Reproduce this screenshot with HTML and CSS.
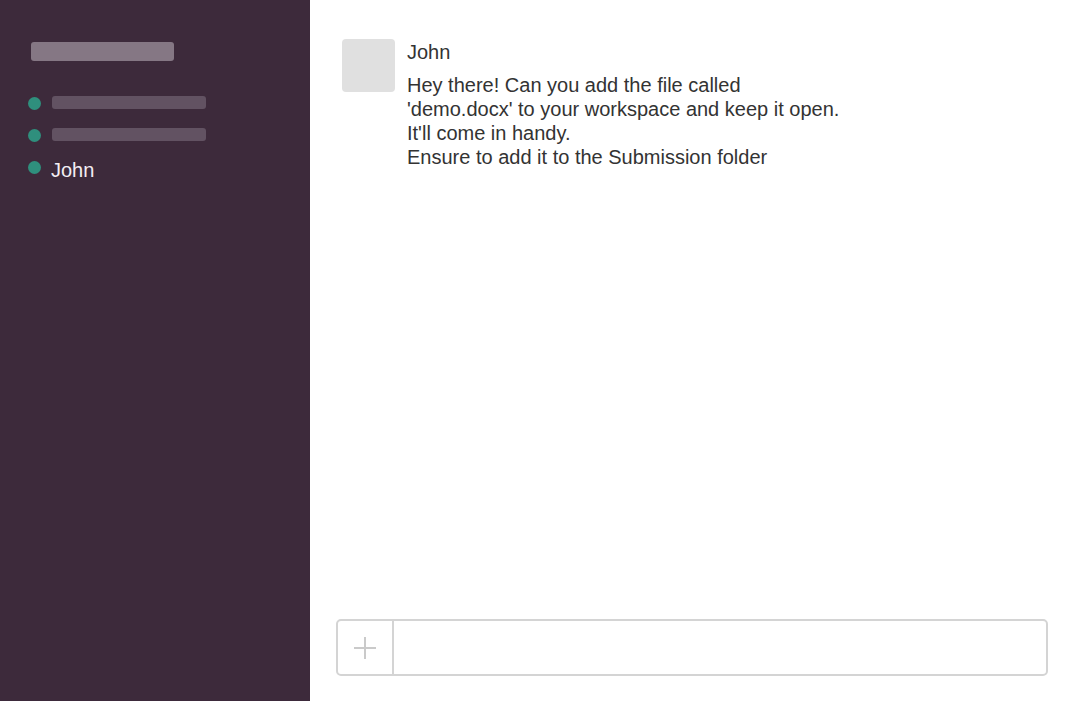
FILE: index.html
```html
<!DOCTYPE html>
<html>
<head>
<meta charset="utf-8">
<link rel="stylesheet" href="styles.css">
</head>
<body>
<div class="app">
  <aside class="sidebar">
    <div class="team-bar"></div>
    <ul class="channels">
      <li class="channel"><span class="dot"></span><span class="placeholder"></span></li>
      <li class="channel"><span class="dot"></span><span class="placeholder"></span></li>
      <li class="channel"><span class="dot"></span><span class="name">John</span></li>
    </ul>
  </aside>
  <main class="main">
    <div class="messages">
      <div class="message">
        <div class="avatar"></div>
        <div class="body">
          <div class="author">John</div>
          <div class="text">Hey there! Can you add the file called<br>'demo.docx' to your workspace and keep it open.<br>It'll come in handy.<br>Ensure to add it to the Submission folder</div>
        </div>
      </div>
    </div>
    <div class="composer">
      <div class="attach">
        <svg width="22" height="22" viewBox="0 0 22 22"><path d="M11 0V22M0 11H22" stroke="#cacaca" stroke-width="2" fill="none"/></svg>
      </div>
      <div class="input"></div>
    </div>
  </main>
</div>
</body>
</html>
```

FILE: styles.css
```css
html, body {
  margin: 0;
  padding: 0;
  height: 100%;
}
body {
  font-family: "Liberation Sans", Arial, sans-serif;
  background: #ffffff;
}
.app {
  display: flex;
  height: 701px;
}
.sidebar {
  width: 310px;
  flex: none;
  background: #3d2a3b;
  box-sizing: border-box;
  padding: 42px 0 0 28px;
}
.team-bar {
  width: 143px;
  height: 19px;
  margin-left: 3px;
  background: #857784;
  border-radius: 3px;
}
.channels {
  list-style: none;
  margin: 35px 0 0 0;
  padding: 0;
  display: flex;
  flex-direction: column;
  gap: 19px;
}
.channel {
  display: flex;
  align-items: flex-start;
  height: 13px;
  gap: 11px;
}
.dot {
  width: 13px;
  height: 13px;
  margin-top: 1px;
  border-radius: 50%;
  background: #2f8f7d;
  flex: none;
}
.placeholder {
  width: 154px;
  height: 13px;
  border-radius: 3px;
  background: #625262;
}
.name {
  color: #f3eef3;
  font-size: 20px;
  line-height: 20px;
  position: relative;
  top: 0;
  left: -1px;
}
.main {
  flex: 1;
  display: flex;
  flex-direction: column;
  padding: 0 32px 25px 27px;
  box-sizing: border-box;
}
.messages {
  flex: 1;
  padding: 39px 0 0 5px;
}
.message {
  display: flex;
  gap: 12px;
}
.avatar {
  width: 53px;
  height: 53px;
  border-radius: 4px;
  background: #e0e0e0;
  flex: none;
}
.body {
  color: #333333;
  font-size: 20px;
  padding-top: 1px;
}
.author {
  line-height: 24px;
}
.text {
  margin-top: 9px;
  line-height: 24px;
}
.composer {
  height: 57px;
  margin-left: -1px;
  box-sizing: border-box;
  border: 2px solid #d4d4d4;
  border-radius: 5px;
  display: flex;
}
.attach {
  width: 54px;
  flex: none;
  border-right: 2px solid #d4d4d4;
  display: flex;
  align-items: center;
  justify-content: center;
}
.input {
  flex: 1;
}
```
